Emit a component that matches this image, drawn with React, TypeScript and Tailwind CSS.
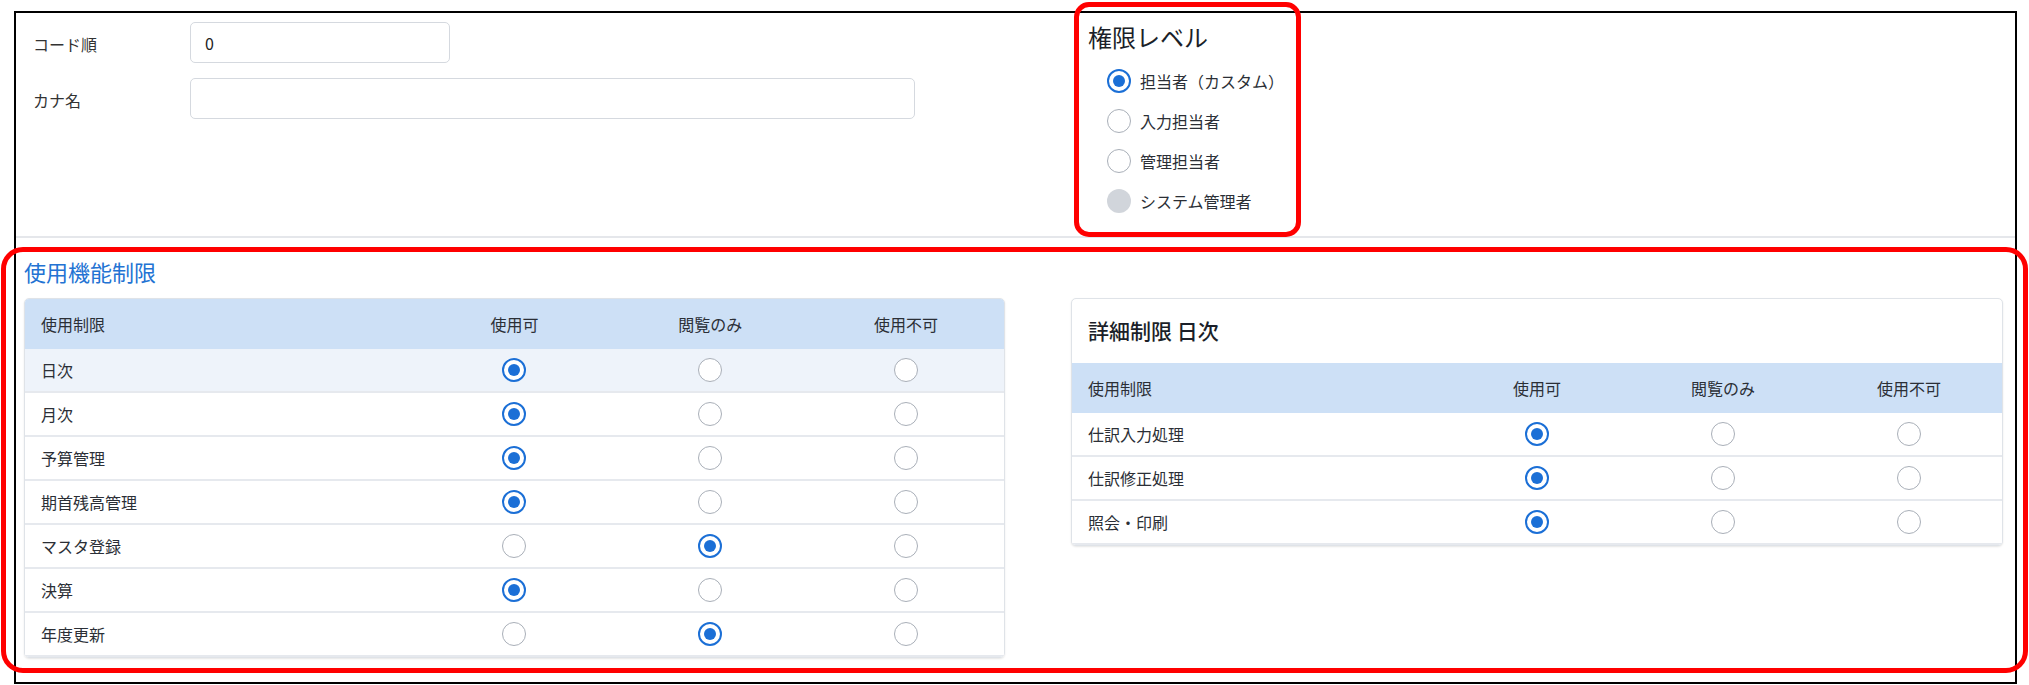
import React from "react";

type Choice = 0 | 1 | 2;

function Radio({ checked, disabled }: { checked?: boolean; disabled?: boolean }) {
  if (disabled) {
    return <span className="block w-[24px] h-[24px] rounded-full bg-[#d1d5db]" />;
  }
  if (checked) {
    return (
      <span className="flex items-center justify-center w-[24px] h-[24px] rounded-full border-2 border-[#1b6fd6] bg-white">
        <span className="block w-[12px] h-[12px] rounded-full bg-[#1b6fd6]" />
      </span>
    );
  }
  return <span className="block w-[24px] h-[24px] rounded-full border-[1.5px] border-[#a9afb8] bg-white" />;
}

const levels = [
  { label: "担当者（カスタム）", checked: true },
  { label: "入力担当者" },
  { label: "管理担当者" },
  { label: "システム管理者", disabled: true },
];

const features: { name: string; value: Choice }[] = [
  { name: "日次", value: 0 },
  { name: "月次", value: 0 },
  { name: "予算管理", value: 0 },
  { name: "期首残高管理", value: 0 },
  { name: "マスタ登録", value: 1 },
  { name: "決算", value: 0 },
  { name: "年度更新", value: 1 },
];

const details: { name: string; value: Choice }[] = [
  { name: "仕訳入力処理", value: 0 },
  { name: "仕訳修正処理", value: 0 },
  { name: "照会・印刷", value: 0 },
];

const columns = ["使用可", "閲覧のみ", "使用不可"];

function PermissionTable({
  rows,
  highlightFirst,
}: {
  rows: { name: string; value: Choice }[];
  highlightFirst?: boolean;
}) {
  return (
    <div>
      <div className="grid grid-cols-[40%_20%_20%_20%] h-[50px] items-center bg-[#cde0f6] text-[16px] text-[#2b2f36]">
        <div className="pl-[16px]">使用制限</div>
        {columns.map((c) => (
          <div key={c} className="text-center">
            {c}
          </div>
        ))}
      </div>
      {rows.map((r, i) => (
        <div
          key={r.name}
          className={
            "grid grid-cols-[40%_20%_20%_20%] h-[44px] items-center border-b-2 border-[#e6e9ee] text-[16px] text-[#2b2f36] " +
            (highlightFirst && i === 0 ? "bg-[#eef3fa]" : "bg-white")
          }
        >
          <div className="pl-[16px]">{r.name}</div>
          {[0, 1, 2].map((c) => (
            <div key={c} className="flex justify-center">
              <Radio checked={r.value === c} />
            </div>
          ))}
        </div>
      ))}
    </div>
  );
}

export default function App() {
  return (
    <div className="relative w-[2029px] h-[685px] bg-white font-['Noto_Sans_CJK_JP','Noto_Sans',sans-serif] overflow-hidden">
      <div className="absolute left-[14px] top-[11px] w-[2003px] h-[673px] border-2 border-black flex flex-col">
        {/* basic info */}
        <div className="h-[225px] shrink-0 border-b-2 border-[#e5e7eb] flex">
          <div className="w-[1072px] pl-[17px] pt-[9px]">
            <div className="flex items-center h-[41px]">
              <div className="w-[157px] pt-[2px] text-[16px] text-[#333]">コード順</div>
              <div className="w-[260px] h-[41px] border border-[#d5d9df] rounded-[5px] flex items-center px-[14px] text-[16px] text-[#222]">
                0
              </div>
            </div>
            <div className="flex items-center h-[41px] mt-[15px]">
              <div className="w-[157px] pt-[2px] text-[16px] text-[#333]">カナ名</div>
              <div className="w-[725px] h-[41px] border border-[#d5d9df] rounded-[5px]" />
            </div>
          </div>
          <div className="pt-[9px]">
            <div className="h-[30px] leading-[30px] text-[24px] text-[#1b1f29]">権限レベル</div>
            <div className="mt-[9px] pl-[19px]">
              {levels.map((l) => (
                <div key={l.label} className="flex items-center h-[40px] gap-[9px]">
                  <Radio checked={l.checked} disabled={l.disabled} />
                  <span className="text-[16px] text-[#2b2f36]">{l.label}</span>
                </div>
              ))}
            </div>
          </div>
        </div>

        {/* feature permissions */}
        <div className="pl-[8px] pt-[17px]">
          <div className="h-[32px] leading-[32px] text-[22px] text-[#2373d3]">使用機能制限</div>
          <div className="flex items-start gap-[66px] mt-[11px]">
            <div className="w-[981px] rounded-[5px] overflow-hidden border border-[#dfe3e8] shadow-[0_1px_2px_rgba(0,0,0,0.10)]">
              <PermissionTable rows={features} highlightFirst />
            </div>
            <div className="w-[932px] rounded-[5px] overflow-hidden border border-[#dfe3e8] shadow-[0_1px_2px_rgba(0,0,0,0.10)] bg-white">
              <div className="h-[64px] flex items-center pl-[16px] text-[21px] font-medium text-[#1b1f29]">
                詳細制限 日次
              </div>
              <PermissionTable rows={details} />
            </div>
          </div>
        </div>
      </div>

      {/* red highlight frames */}
      <div className="absolute left-[1074px] top-[2px] w-[227px] h-[235px] border-[5px] border-[#ff0000] rounded-[15px]" />
      <div className="absolute left-[1px] top-[247px] w-[2027px] h-[426px] border-[5px] border-[#ff0000] rounded-[22px]" />
    </div>
  );
}
